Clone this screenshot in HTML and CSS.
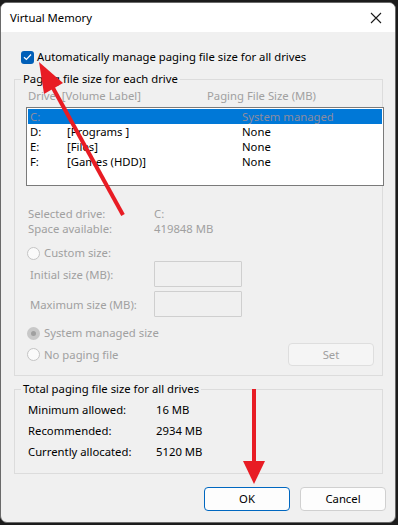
FILE: index.html
```html
<!DOCTYPE html>
<html>
<head>
<meta charset="utf-8">
<link rel="stylesheet" href="styles.css">
</head>
<body>
<div class="window">
  <div class="titlebar">
    <span class="title">Virtual Memory</span>
    <svg class="close" width="12" height="12" viewBox="0 0 12 12"><path d="M1 1 L11 11 M11 1 L1 11" stroke="#1a1a1a" stroke-width="1.1" fill="none"/></svg>
  </div>
  <div class="content">
    <label class="check-row">
      <span class="checkbox"><svg width="9" height="8" viewBox="0 0 9 8"><path d="M1 4.2 L3.4 6.5 L8 1.5" stroke="#fff" stroke-width="1.2" fill="none"/></svg></span>
      <span>Automatically manage paging file size for all drives</span>
    </label>

    <fieldset class="group group-drives">
      <legend>Paging file size for each drive</legend>
      <div class="list-head disabled">
        <span class="col-drive">Drive&nbsp;&nbsp;[Volume Label]</span>
        <span class="col-size">Paging File Size (MB)</span>
      </div>
      <div class="listbox">
        <div class="row selected"><span class="c1">C:</span><span class="c2"></span><span class="c3">System managed</span></div>
        <div class="row"><span class="c1">D:</span><span class="c2">[Programs ]</span><span class="c3">None</span></div>
        <div class="row"><span class="c1">E:</span><span class="c2">[Files]</span><span class="c3">None</span></div>
        <div class="row"><span class="c1">F:</span><span class="c2">[Games (HDD)]</span><span class="c3">None</span></div>
      </div>

      <div class="info disabled">
        <span>Selected drive:</span><span>C:</span>
        <span>Space available:</span><span>419848 MB</span>
      </div>

      <div class="radio-row disabled custom"><span class="radio"></span><span>Custom size:</span></div>
      <div class="size-row disabled first"><span class="size-label">Initial size (MB):</span><span class="input"></span></div>
      <div class="size-row disabled"><span class="size-label">Maximum size (MB):</span><span class="input"></span></div>

      <div class="radio-row disabled sysman"><span class="radio checked"></span><span>System managed size</span></div>
      <div class="bottom-row">
        <div class="radio-row disabled"><span class="radio"></span><span>No paging file</span></div>
        <button class="btn set" disabled>Set</button>
      </div>
    </fieldset>

    <fieldset class="group group-total">
      <legend>Total paging file size for all drives</legend>
      <div class="totals">
        <span>Minimum allowed:</span><span>16 MB</span>
        <span>Recommended:</span><span>2934 MB</span>
        <span>Currently allocated:</span><span>5120 MB</span>
      </div>
    </fieldset>

    <div class="buttons">
      <button class="btn ok">OK</button>
      <button class="btn">Cancel</button>
    </div>
  </div>
</div>

<svg class="annot" width="398" height="525" viewBox="0 0 398 525">
  <line x1="123" y1="215" x2="53" y2="88" stroke="#e81c24" stroke-width="4"/>
  <polygon points="39,62 63,83 44,94" fill="#e81c24"/>
  <line x1="254" y1="389" x2="254" y2="463" stroke="#e81c24" stroke-width="4"/>
  <polygon points="243,461 265,461 254,484" fill="#e81c24"/>
</svg>
</body>
</html>
```

FILE: styles.css
```css
* { box-sizing: border-box; }
html, body { margin: 0; padding: 0; }
body {
  width: 398px;
  height: 525px;
  background: #1c1c1c;
  padding-top: 2px;
  font-family: "Noto Sans", "Open Sans", sans-serif;
  font-size: 11.3px;
  color: #000;
  position: relative;
  overflow: hidden;
}
.window {
  width: 396px;
  height: 521px;
  border: 1px solid #6a6a6a;
  border-radius: 7px;
  overflow: hidden;
  background: #f0f0f0;
  display: flex;
  flex-direction: column;
}
.titlebar {
  height: 29px;
  background: #fff;
  display: flex;
  align-items: center;
  justify-content: space-between;
  padding: 0 13px 0 9px;
  flex: none;
}
.title { font-size: 11.3px; line-height: 16px; padding-top: 1px; }
.close { display: block; margin-top: 1px; }

.content {
  padding: 18px 12px 0 13px;
  flex: 1;
}
.check-row {
  display: flex;
  align-items: center;
  height: 14px;
  margin-left: 7px;
  gap: 3px;
  line-height: 14px;
}
.checkbox {
  width: 13px;
  height: 13px;
  border-radius: 3px;
  background: #005fb8;
  display: flex;
  align-items: center;
  justify-content: center;
}
.checkbox svg { display: block; }

.group {
  margin: 0;
  border: 1px solid #dcdcdc;
  padding: 0 0 0 11px;
  min-width: 0;
}
.group legend {
  padding: 0 2px;
  margin-left: -5px;
  line-height: 16px;
}
.group-drives {
  margin-top: 7px;
  height: 305px;
  padding-right: 0;
}
.disabled { color: #a0a0a0; }

.list-head {
  display: flex;
  margin-top: 1px;
  line-height: 16px;
  padding-left: 2px;
}
.col-drive { width: 179px; }

.listbox {
  margin-top: 3px;
  width: 358px;
  height: 79px;
  border: 1px solid #7a7a7a;
  background: #fff;
  padding: 1px;
}
.row {
  display: flex;
  height: 15px;
  line-height: 15px;
  padding-left: 2px;
}
.row .c1 { width: 37px; }
.row .c2 { width: 175px; }
.row.selected { background: #0078d7; color: #8c8ca0; }

.info {
  display: grid;
  grid-template-columns: 126px auto;
  line-height: 15px;
  margin-top: 20px;
  padding-left: 2px;
}

.radio-row {
  display: flex;
  align-items: center;
  gap: 4px;
  height: 16px;
  line-height: 16px;
}
.radio {
  width: 13px;
  height: 13px;
  border-radius: 50%;
  border: 1px solid #c4c4c4;
  background: #fafafa;
  flex: none;
  margin-left: 1px;
}
.radio.checked {
  border: 4px solid #c8c8c8;
  background: #a0a0a0;
}
.custom { margin-top: 9px; }

.size-row {
  display: flex;
  align-items: center;
  margin-top: 4px;
  padding-left: 4px;
}
.size-row.first { margin-top: 0; }
.size-label { width: 124px; }
.input {
  width: 88px;
  height: 26px;
  border: 1px solid #cfcfcf;
  background: #f0f0f0;
  border-radius: 1px;
}

.sysman { margin-top: 8px; }
.bottom-row {
  display: flex;
  align-items: center;
  justify-content: space-between;
  margin-top: 2px;
  width: 348px;
}
.btn {
  font-family: inherit;
  font-size: 11.3px;
  height: 24px;
  width: 86px;
  border: 1px solid #d0d0d0;
  border-radius: 4px;
  background: #fdfdfd;
  color: #000;
  padding: 0;
  line-height: 20px;
}
.btn.set {
  height: 23px;
  background: #f5f5f5;
  border-color: #dedede;
  color: #a0a0a0;
}

.group-total {
  margin-top: 5px;
  height: 93px;
}
.totals {
  display: grid;
  grid-template-columns: 128px auto;
  row-gap: 5px;
  line-height: 16px;
  margin-top: 5px;
  padding-left: 2px;
}

.buttons {
  display: flex;
  justify-content: flex-end;
  gap: 10px;
  margin-top: 13px;
  margin-right: -3px;
}
.btn.ok { border-color: #0067c0; }

.annot {
  position: absolute;
  left: 0;
  top: 0;
  pointer-events: none;
}
```
